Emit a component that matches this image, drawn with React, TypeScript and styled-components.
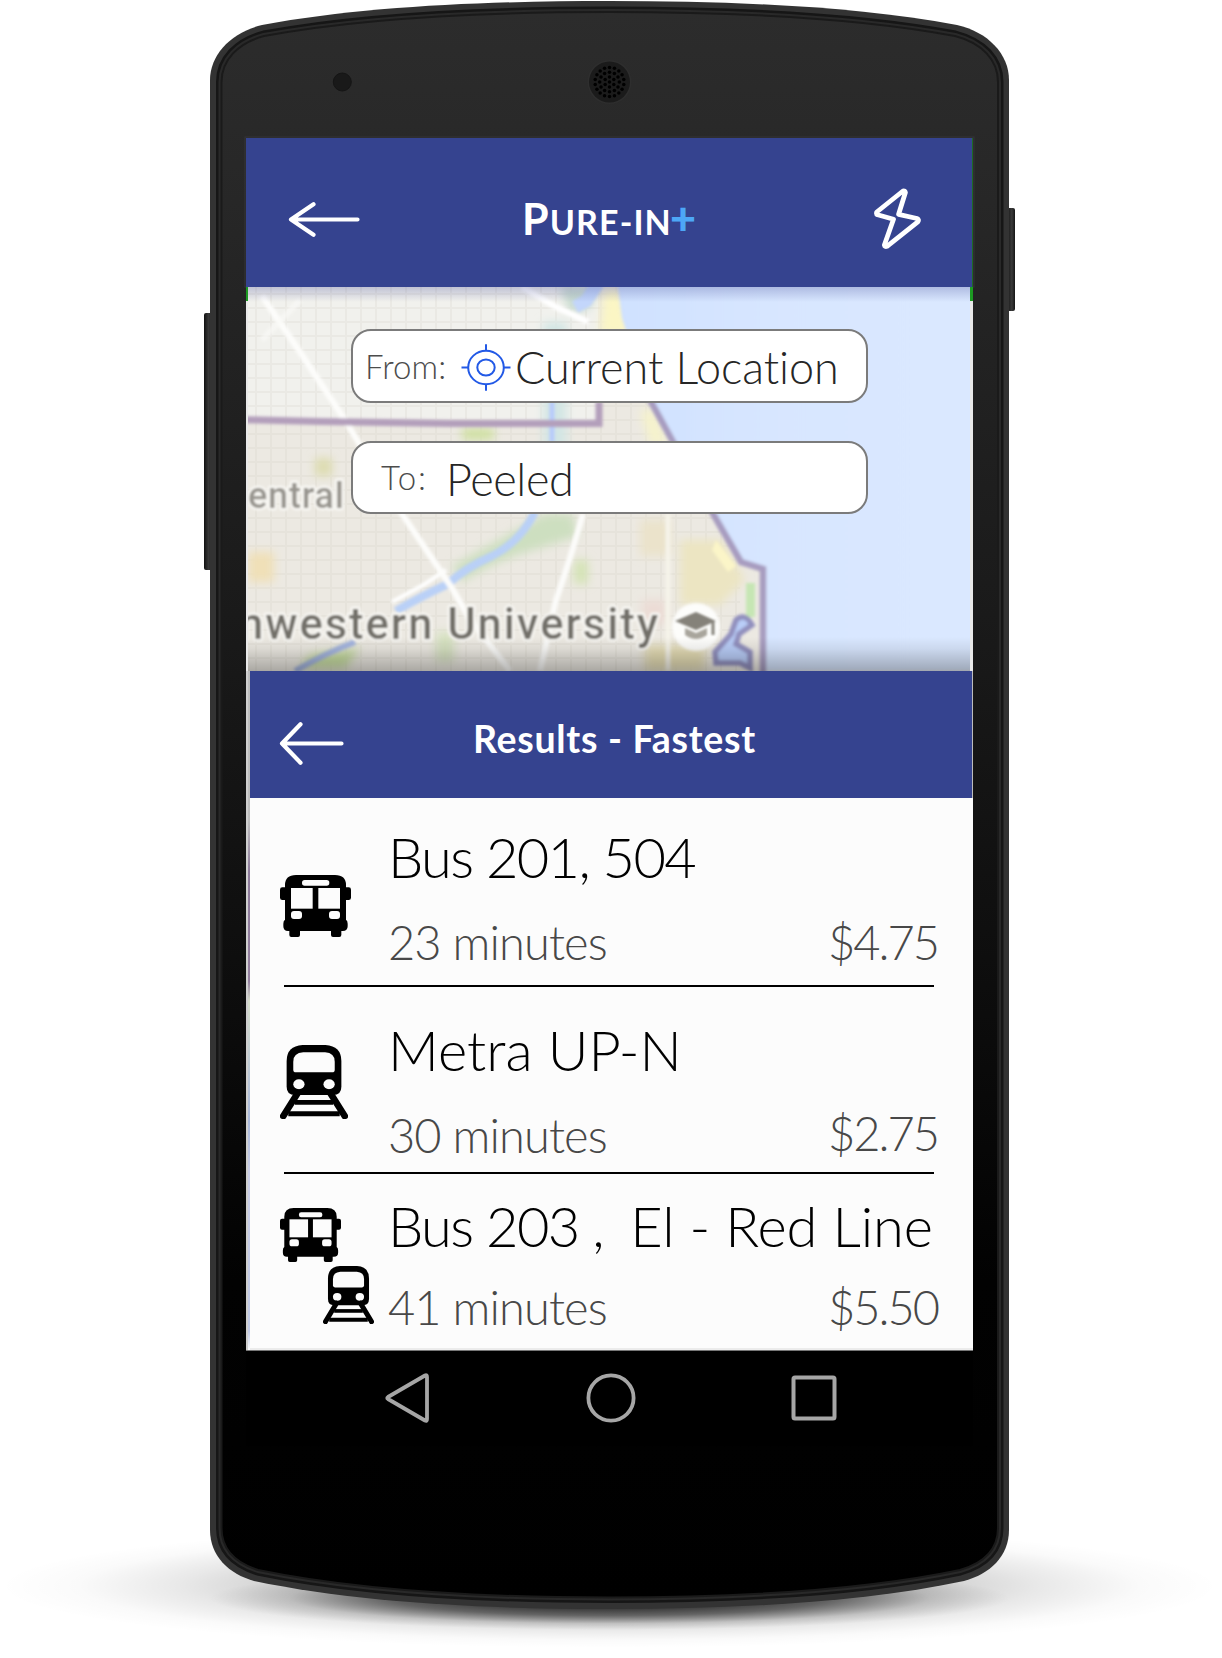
import React from "react";
import styled, { createGlobalStyle } from "styled-components";

const NAVY = "#35438f";

const GlobalStyle = createGlobalStyle`
  *, *::before, *::after { box-sizing: border-box; }
  body {
    margin: 0;
    background: #fff;
    font-family: Lato, "Open Sans", sans-serif;
    font-variant-ligatures: none;
    overflow: hidden;
  }
`;

const Stage = styled.main`
  position: relative;
  width: 1222px;
  height: 1658px;
  padding: 138px 0 0 246px;
  overflow: hidden;
`;

const DeviceArt = styled.svg`
  position: absolute;
  inset: 0;
  display: block;
`;

const Screen = styled.section`
  position: relative;
  display: flex;
  flex-direction: column;
  width: 727px;
`;

const AppBar = styled.header`
  display: flex;
  align-items: center;
  justify-content: space-between;
  height: 149px;
  width: 726px;
  padding: 13px 50px 0 42px;
  background: ${NAVY};
  box-shadow: 1px 0 0 #1d6a25;
`;

const Brand = styled.h1`
  display: flex;
  align-items: baseline;
  margin: 2px 18px 0 0;
  font-size: 34px;
  line-height: 44px;
  font-weight: 700;
  letter-spacing: 1.1px;
  color: #fff;
`;

const BrandInitial = styled.span`
  font-size: 43px;
`;

const BrandPlus = styled.span`
  font-size: 45px;
  font-weight: 900;
  line-height: 30px;
  letter-spacing: 0;
  margin: 0 -2px 0 -2px;
  color: #4da7f7;
`;

const MapArea = styled.section`
  position: relative;
  display: flex;
  flex-direction: column;
  align-items: center;
  gap: 38px;
  height: 384px;
  padding: 42px 0 0 0;
  background: linear-gradient(#1c9a22 14px, #e9e9e9 14px);
`;

const MapArt = styled.svg`
  position: absolute;
  left: 2px;
  top: 0;
  display: block;
`;

const Field = styled.div`
  position: relative;
  display: flex;
  align-items: center;
  width: 517px;
  height: 73.5px;
  border: 2px solid #7b7b7b;
  border-radius: 20px;
  background: #fff;
`;

const FieldLabel = styled.span<{ $indent: number; $width: number; $track: number }>`
  width: ${(p) => p.$width}px;
  margin-left: ${(p) => p.$indent}px;
  font-size: 33px;
  line-height: 44px;
  font-weight: 300;
  letter-spacing: ${(p) => p.$track}px;
  white-space: nowrap;
  color: #4c4c4c;
`;

const FieldValue = styled.span<{ $indent: number; $track: number }>`
  margin-left: ${(p) => p.$indent}px;
  padding-top: 3px;
  font-size: 45px;
  line-height: 56px;
  font-weight: 300;
  letter-spacing: ${(p) => p.$track}px;
  white-space: nowrap;
  color: #262626;
`;

const TargetArt = styled.svg`
  flex: none;
  margin-top: 3px;
`;

const ResultsPanel = styled.section`
  padding-left: 4px;
  height: 680px;
  background: linear-gradient(90deg, #cfcfcf 2px, transparent 2px),
    linear-gradient(#bdbdbd 150px, #8d7b9b 200px, #94809f 310px, #d5dccb 330px, #a9b8da 450px, #c9cde6 500px, #c0c9e4 660px, #fff 680px);
  border-bottom: 1px solid #777;
`;

const ResultsHeader = styled.header`
  display: flex;
  align-items: center;
  height: 127px;
  width: 722px;
  padding: 18px 0 0 29px;
  background: ${NAVY};
`;

const ResultsTitle = styled.h2`
  margin: 0 0 0 129px;
  padding-bottom: 10px;
  font-size: 37.5px;
  line-height: 46px;
  font-weight: 700;
  letter-spacing: 0.7px;
  white-space: nowrap;
  color: #fff;
`;

const ResultList = styled.ul`
  width: 723px;
  height: 552px;
  margin: 0;
  padding: 0 39px 0 34px;
  list-style: none;
  background: #fcfcfc;
  box-shadow: inset 0 -2px 0 #ececec;
`;

const ResultRow = styled.li<{ $height: number; $top: number }>`
  display: grid;
  grid-template-columns: 104px 1fr;
  height: ${(p) => p.$height}px;
  padding-top: ${(p) => p.$top}px;
  border-bottom: 2px solid #000;

  &:last-child {
    border-bottom: none;
  }
`;

const IconStack = styled.div<{ $top: number }>`
  display: flex;
  flex-direction: column;
  align-items: flex-start;
  gap: 4px;
  margin: ${(p) => p.$top}px 0 0 -4px;

  svg + svg {
    margin-left: 43px;
  }
`;

const RouteInfo = styled.div<{ $gap: number }>`
  display: flex;
  flex-direction: column;
  gap: ${(p) => p.$gap}px;
  min-width: 0;
`;

const RouteName = styled.h3`
  margin: 0;
  font-size: 56px;
  line-height: 60px;
  font-weight: 300;
  white-space: pre;
  color: #000;
`;

const Leg = styled.span<{ $track: number }>`
  letter-spacing: ${(p) => p.$track}px;
`;

const RouteMeta = styled.div`
  display: flex;
  justify-content: space-between;
  width: 550px;
  font-size: 47px;
  line-height: 50px;
  font-weight: 300;
  color: #484848;
`;

const Duration = styled.span`
  letter-spacing: -0.9px;
  white-space: pre;
`;

const Price = styled.span<{ $lift: number }>`
  letter-spacing: -2px;
  margin-top: ${(p) => -p.$lift}px;
`;

const NavBar = styled.nav`
  display: flex;
  align-items: center;
  justify-content: space-between;
  height: 95px;
  padding: 0 136px 2px 138px;
  background: #000;
`;

const BODY =
  "M210 80 C210 54 232 32 262 25 C365 6 490 1 609.5 1 C730 1 855 6 957 25 C988 32 1009 54 1009 80 L1009 1530 C1009 1556 990 1574 964 1581 C860 1603 730 1609 609.5 1609 C490 1609 360 1603 254 1581 C229 1574 210 1556 210 1530 Z";
const FACE =
  "M221.5 82 C221.5 60 238 43 264 36 C365 17 490 12 609.5 12 C730 12 855 17 955 36 C982 43 998 60 998 82 L998 1528 C998 1550 984 1563 960 1570 C860 1591 730 1597.5 609.5 1597.5 C490 1597.5 360 1591 258 1570 C236 1563 221.5 1550 221.5 1528 Z";

const speakerHoles: Array<[number, number]> = [[0, 0]];
[
  [5, 6],
  [9.8, 12],
  [14.5, 18],
].forEach(([radius, count]) => {
  for (let i = 0; i < count; i++) {
    const a = (i / count) * Math.PI * 2;
    speakerHoles.push([Math.sin(a) * radius, Math.cos(a) * radius]);
  }
});

const Device = () => (
  <DeviceArt width="1222" height="1658" viewBox="0 0 1222 1658">
    <defs>
      <linearGradient id="face" x1="0" y1="0" x2="0" y2="1">
        <stop offset="0" stopColor="#2c2c2c" />
        <stop offset="0.12" stopColor="#272727" />
        <stop offset="0.4" stopColor="#191919" />
        <stop offset="0.65" stopColor="#0b0b0b" />
        <stop offset="0.8" stopColor="#020202" />
        <stop offset="1" stopColor="#000" />
      </linearGradient>
      <linearGradient id="key" x1="0" y1="0" x2="1" y2="0">
        <stop offset="0" stopColor="#111" />
        <stop offset="0.6" stopColor="#3a3a3a" />
        <stop offset="1" stopColor="#151515" />
      </linearGradient>
      <radialGradient id="haze">
        <stop offset="0" stopColor="#000" stopOpacity="0.5" />
        <stop offset="0.5" stopColor="#000" stopOpacity="0.2" />
        <stop offset="0.7" stopColor="#000" stopOpacity="0.09" />
        <stop offset="0.87" stopColor="#000" stopOpacity="0.02" />
        <stop offset="1" stopColor="#000" stopOpacity="0" />
      </radialGradient>
      <radialGradient id="contact">
        <stop offset="0" stopColor="#000" stopOpacity="0.95" />
        <stop offset="0.55" stopColor="#000" stopOpacity="0.5" />
        <stop offset="0.8" stopColor="#000" stopOpacity="0.12" />
        <stop offset="1" stopColor="#000" stopOpacity="0" />
      </radialGradient>
    </defs>
    <ellipse cx="609.5" cy="1586" rx="610" ry="62" fill="url(#haze)" />
    <ellipse cx="609.5" cy="1598" rx="400" ry="32" fill="url(#contact)" />
    <rect x="204" y="313" width="8" height="257" rx="2" fill="url(#key)" />
    <rect x="1007" y="208" width="8" height="103" rx="2" fill="url(#key)" />
    <path d={BODY} fill="#333" />
    <path d={FACE} fill="none" stroke="#161616" strokeWidth="11" />
    <path d={FACE} fill="none" stroke="#292929" strokeWidth="6" />
    <path d={FACE} fill="url(#face)" stroke="#1a1a1a" strokeWidth="2" />
    <circle cx="342.3" cy="82" r="9" fill="#191919" stroke="#151515" strokeWidth="1" />
    <circle cx="609.5" cy="82" r="22" fill="#2e2e2e" />
    <circle cx="609.5" cy="82" r="20.5" fill="#1b1b1b" />
    {speakerHoles.map(([x, y], i) => (
      <circle key={i} cx={609.5 + x} cy={82 + y} r="1.75" fill="#000" />
    ))}
    <rect x="245" y="137" width="729" height="150" fill="none" stroke="#343438" />
  </DeviceArt>
);

const streets: string[] = [];
for (let x = 256; x < 740; x += 15) streets.push(`M${x} 287V671`);
for (let y = 294; y < 671; y += 14) streets.push(`M248 ${y}H740`);

const CityMap = () => (
  <MapArt width="722" height="384" viewBox="248 287 722 384">
    <defs>
      <filter id="soft" x="-5%" y="-5%" width="110%" height="110%">
        <feGaussianBlur stdDeviation="1.6" />
      </filter>
      <filter id="softer" x="-20%" y="-20%" width="140%" height="140%">
        <feGaussianBlur stdDeviation="5" />
      </filter>
      <filter id="textSoft" x="-5%" y="-20%" width="110%" height="140%">
        <feGaussianBlur stdDeviation="0.9" />
      </filter>
      <linearGradient id="water" x1="0" y1="0" x2="1" y2="0">
        <stop offset="0" stopColor="#cfe1ff" />
        <stop offset="0.45" stopColor="#d8e6ff" />
        <stop offset="1" stopColor="#dae8ff" />
      </linearGradient>
      <linearGradient id="topShade" x1="0" y1="0" x2="0" y2="1">
        <stop offset="0" stopColor="#30388a" stopOpacity="0.25" />
        <stop offset="1" stopColor="#30388a" stopOpacity="0" />
      </linearGradient>
      <linearGradient id="bottomShade" x1="0" y1="0" x2="0" y2="1">
        <stop offset="0" stopColor="#000" stopOpacity="0" />
        <stop offset="0.35" stopColor="#000" stopOpacity="0.07" />
        <stop offset="1" stopColor="#000" stopOpacity="0.28" />
      </linearGradient>
    </defs>
    <rect x="248" y="287" width="722" height="384" fill="#ece9e2" />
    <path d="M248 287H598V424L248 420Z" fill="#f1f1ed" />
    <path d={streets.join("")} stroke="#d0ccc2" strokeOpacity="0.22" strokeWidth="1.8" fill="none" />
    <g filter="url(#softer)">
      <path d="M560 287L598 287L590 308L570 314Z" fill="#c9dcd0" />
      <path d="M543 322H567V460H543Z" fill="#d3e6e4" />
      <path d="M545 514H572L578 536L540 548Q495 560 462 582L452 566Z" fill="#cddfc0" />
      <path d="M462 428H494V440H462Z" fill="#cfe0a0" />
      <path d="M315 458h17v18h-17z" fill="#dddcb0" />
      <path d="M248 552H274V582H248Z" fill="#f0e0b8" />
      <path d="M574 560h14v24h-14z" fill="#d4e3b5" />
      <path d="M310 655L360 648L345 668H300Z" fill="#c5dc9e" />
      <path d="M436 632h18v30h-18z" fill="#d5e1c0" />
      <path d="M680 540L722 540L745 580L720 605H680Z" fill="#ece5c2" />
      <path d="M640 520h30v36h-30z" fill="#ebe3cb" />
      <path d="M645 645h60v26h-60z" fill="#e4dcb4" />
      <path d="M642 600h24v24h-24z" fill="#ecdcd5" />
      <path d="M604 290L620 290L632 335H600Z" fill="#fbf6c4" />
      <path d="M640 410L655 410L668 445H650Z" fill="#f6f3cc" />
    </g>
    <g filter="url(#soft)">
      <path d="M618 287L622 318L650 402L672 440L712 514L742 562L764 570L765 671H990V267H618Z" fill="url(#water)" />
      <path d="M716 540L736 566L728 572L712 550Z" fill="#fbf5c8" />
      <path d="M598 283L586 301L575 307" stroke="#c3d6fb" strokeWidth="13" fill="none" />
      <path d="M552 402V442" stroke="#b7cbfb" strokeWidth="5" fill="none" />
      <path d="M535 512Q520 542 492 556Q465 568 448 584Q420 597 396 611" stroke="#b9d0f7" strokeWidth="8" fill="none" />
      <path d="M355 642Q328 652 295 671" stroke="#a4b5e0" strokeWidth="6" fill="none" />
      <path d="M446 570L425 584L392 602" stroke="#fff" strokeWidth="4" fill="none" />
      <path d="M262 296L300 352L345 420L398 508L452 588L468 616L510 671" stroke="#fdfdfb" strokeWidth="6" fill="none" />
      <path d="M300 300L262 340" stroke="#faf9f6" strokeWidth="6" strokeOpacity="0.7" fill="none" />
      <path d="M522 287L556 307L588 322" stroke="#fff" strokeWidth="6" fill="none" />
      <path d="M583 514Q570 560 556 600L540 671" stroke="#fcfcfa" strokeWidth="6" fill="none" />
      <path d="M668 514V671" stroke="#f6f4ea" strokeWidth="5" fill="none" />
      <path d="M236 419.5L320 421.5L450 423.5H599V402" stroke="#b39fbb" strokeWidth="7" fill="none" />
      <path d="M650 400L672 440L712 512L741 562L763 569V690" stroke="#a79cc0" strokeWidth="6.5" fill="none" />
      <path d="M746 583h9v34h-9z" fill="#c6e6b4" />
      <path d="M715 652L731 634L736 620Q745 612 752 625L739 634L736 644L750 652V668L740 663H716Z" stroke="#918fbd" strokeWidth="5.5" fill="#b9cdf8" />
      <circle cx="696" cy="627" r="24" fill="#fdfdfb" />
    </g>
    <g
      fontFamily="Roboto, sans-serif"
      stroke="#f7f6f2"
      paintOrder="stroke"
      strokeWidth="5"
      strokeLinejoin="round"
      filter="url(#textSoft)"
    >
      <text x="248" y="508" fontSize="36" fill="#98958f" fontWeight="500" textLength="96">
        entral
      </text>
      <text x="239" y="639" fontSize="43.5" fill="#726f69" fontWeight="500" textLength="419">
        nwestern University
      </text>
    </g>
    <g filter="url(#textSoft)">
      <path d="M675 621L696 612L716 621L696 630Z" fill="#85827a" />
      <path d="M685 628V635Q696 643 707 635V628L696 633Z" fill="#a8a59c" />
      <path d="M713 622V635" stroke="#85827a" strokeWidth="3" />
    </g>
    <rect x="248" y="287" width="722" height="15" fill="url(#topShade)" />
    <rect x="248" y="637" width="722" height="34" fill="url(#bottomShade)" />
  </MapArt>
);

const BackArrow = ({ width, height }: { width: number; height: number }) => {
  const mid = height / 2;
  const head = width > 66 ? 27 : 23;
  return (
    <svg width={width} height={height} viewBox={`0 0 ${width} ${height}`} fill="none" stroke="#fff" strokeWidth="4.2" strokeLinecap="round" strokeLinejoin="round">
      <path d={`M${width - 2.5} ${mid}H3M${head - 1.5} 2.3L3 ${mid}L${head - 1.5} ${height - 2.3}`} />
    </svg>
  );
};

const Bolt = () => (
  <svg width="48" height="62" viewBox="873 188.5 48 62" fill="none" stroke="#fff" strokeWidth="4.8" strokeLinejoin="round">
    <path d="M902 191.5L875.8 212.5Q875 214.5 876.6 215.3L892.5 219.8L883.4 245.5Q883.8 247.6 886 246.8L916.8 222.3Q918.4 220 916 219L897.6 214.8L904.4 193Q904 191 902 191.5Z" />
  </svg>
);

const TargetIcon = () => (
  <TargetArt width="50" height="47" viewBox="-25 -23.5 50 47" fill="none" stroke="#2259e6" strokeWidth="2">
    <ellipse rx="17.8" ry="16.8" />
    <ellipse rx="8.7" ry="8" />
    <path d="M-24.5 0H-17.8M17.8 0H24.5M0 -23.3V-16.8M0 16.8V23.3" />
  </TargetArt>
);

const BusIcon = ({ width, height }: { width: number; height: number }) => (
  <svg width={width} height={height} viewBox="0 0 213 186" preserveAspectRatio="none">
    <path d="M15 37V30Q15 0 48 0H165Q198 0 198 30V37H206Q213 37 213 44V68Q213 75 206 75H198V134Q203 137 203 146V154Q203 168 188 168H184V180Q184 186 178 186H159Q153 186 153 180V168H60V180Q60 186 54 186H34Q28 186 28 180V168H24Q10 168 10 154V146Q10 137 15 134V75H7Q0 75 0 68V44Q0 37 7 37Z" />
    <g fill="#fcfcfc">
      <rect x="66" y="15" width="82" height="17" rx="8" />
      <rect x="33" y="39" width="65" height="62" />
      <rect x="115" y="39" width="65" height="62" />
      <rect x="33" y="108" width="33" height="24" rx="9" />
      <rect x="147" y="108" width="33" height="24" rx="9" />
    </g>
  </svg>
);

const TrainIcon = ({ width, height }: { width: number; height: number }) => (
  <svg width={width} height={height} viewBox="0 0 205 222" preserveAspectRatio="none">
    <path d="M68 0H137Q185 3 185 48V125Q185 150 160 150H45Q20 150 20 125V48Q20 3 68 0Z" />
    <g fill="#fcfcfc">
      <path d="M70 22H136Q165 24 165 50V74Q165 82 157 82H48Q40 82 40 74V50Q40 24 70 22Z" />
      <ellipse cx="57" cy="118" rx="17" ry="15" />
      <ellipse cx="148" cy="118" rx="17" ry="15" />
    </g>
    <g stroke="#000" fill="none">
      <path d="M54 143L10 213M151 143L195 213" strokeWidth="20" strokeLinecap="round" />
      <path d="M45 172H160" strokeWidth="14" />
      <path d="M25 206H180" strokeWidth="15" />
    </g>
  </svg>
);

interface Route {
  legs: Array<{ text: string; track: number }>;
  duration: string;
  price: string;
  height: number;
  top: number;
  gap: number;
  iconTop: number;
  priceLift: number;
  icons: React.ReactNode;
}

const routes: Route[] = [
  {
    legs: [{ text: "Bus 201, 504", track: -1.65 }],
    duration: "23 minutes",
    price: "$4.75",
    height: 189,
    top: 29,
    gap: 30,
    iconTop: 48,
    priceLift: 0,
    icons: <BusIcon width={71} height={62} />,
  },
  {
    legs: [{ text: "Metra UP-N", track: 0 }],
    duration: "30 minutes",
    price: "$2.75",
    height: 187,
    top: 33,
    gap: 30,
    iconTop: 25,
    priceLift: 2,
    icons: <TrainIcon width={68} height={74} />,
  },
  {
    legs: [
      { text: "Bus 203 ,  ", track: -1.6 },
      { text: "El - Red Line", track: -0.1 },
    ],
    duration: "41 minutes",
    price: "$5.50",
    height: 176,
    top: 22,
    gap: 26,
    iconTop: 12,
    priceLift: 0,
    icons: (
      <>
        <BusIcon width={61} height={54} />
        <TrainIcon width={51} height={58} />
      </>
    ),
  },
];

const App = () => (
  <>
    <GlobalStyle />
    <Stage>
      <Device />
      <Screen>
        <AppBar>
          <BackArrow width={72} height={35} />
          <Brand>
            <BrandInitial>P</BrandInitial>URE-IN<BrandPlus>+</BrandPlus>
          </Brand>
          <Bolt />
        </AppBar>
        <MapArea>
          <CityMap />
          <Field>
            <FieldLabel $indent={12} $width={96} $track={0.1}>From:</FieldLabel>
            <TargetIcon />
            <FieldValue $indent={4} $track={-0.05}>Current Location</FieldValue>
          </Field>
          <Field>
            <FieldLabel $indent={28} $width={60} $track={1.8}>To:</FieldLabel>
            <FieldValue $indent={5} $track={-0.4}>Peeled</FieldValue>
          </Field>
        </MapArea>
        <ResultsPanel>
          <ResultsHeader>
            <BackArrow width={65} height={43} />
            <ResultsTitle>Results - Fastest</ResultsTitle>
          </ResultsHeader>
          <ResultList>
            {routes.map((r) => (
              <ResultRow key={r.duration} $height={r.height} $top={r.top}>
                <IconStack $top={r.iconTop}>{r.icons}</IconStack>
                <RouteInfo $gap={r.gap}>
                  <RouteName>
                    {r.legs.map((leg) => (
                      <Leg key={leg.text} $track={leg.track}>{leg.text}</Leg>
                    ))}
                  </RouteName>
                  <RouteMeta>
                    <Duration>{r.duration}</Duration>
                    <Price $lift={r.priceLift}>{r.price}</Price>
                  </RouteMeta>
                </RouteInfo>
              </ResultRow>
            ))}
          </ResultList>
        </ResultsPanel>
        <NavBar>
          <svg width="46" height="52" viewBox="0 0 46 52" fill="none" stroke="#a6a6a6" strokeWidth="3.8" strokeLinejoin="round">
            <path d="M41 3.5Q43 2.5 43 5V47Q43 49.5 41 48.5L4 27Q2.5 26 4 25Z" />
          </svg>
          <svg width="50" height="50" viewBox="0 0 50 50" fill="none" stroke="#a6a6a6" strokeWidth="3.8">
            <circle cx="25" cy="25" r="22.6" />
          </svg>
          <svg width="46" height="46" viewBox="0 0 46 46" fill="none" stroke="#a6a6a6" strokeWidth="4">
            <rect x="2.5" y="2.5" width="41" height="41" rx="1.5" />
          </svg>
        </NavBar>
      </Screen>
    </Stage>
  </>
);

export default App;
